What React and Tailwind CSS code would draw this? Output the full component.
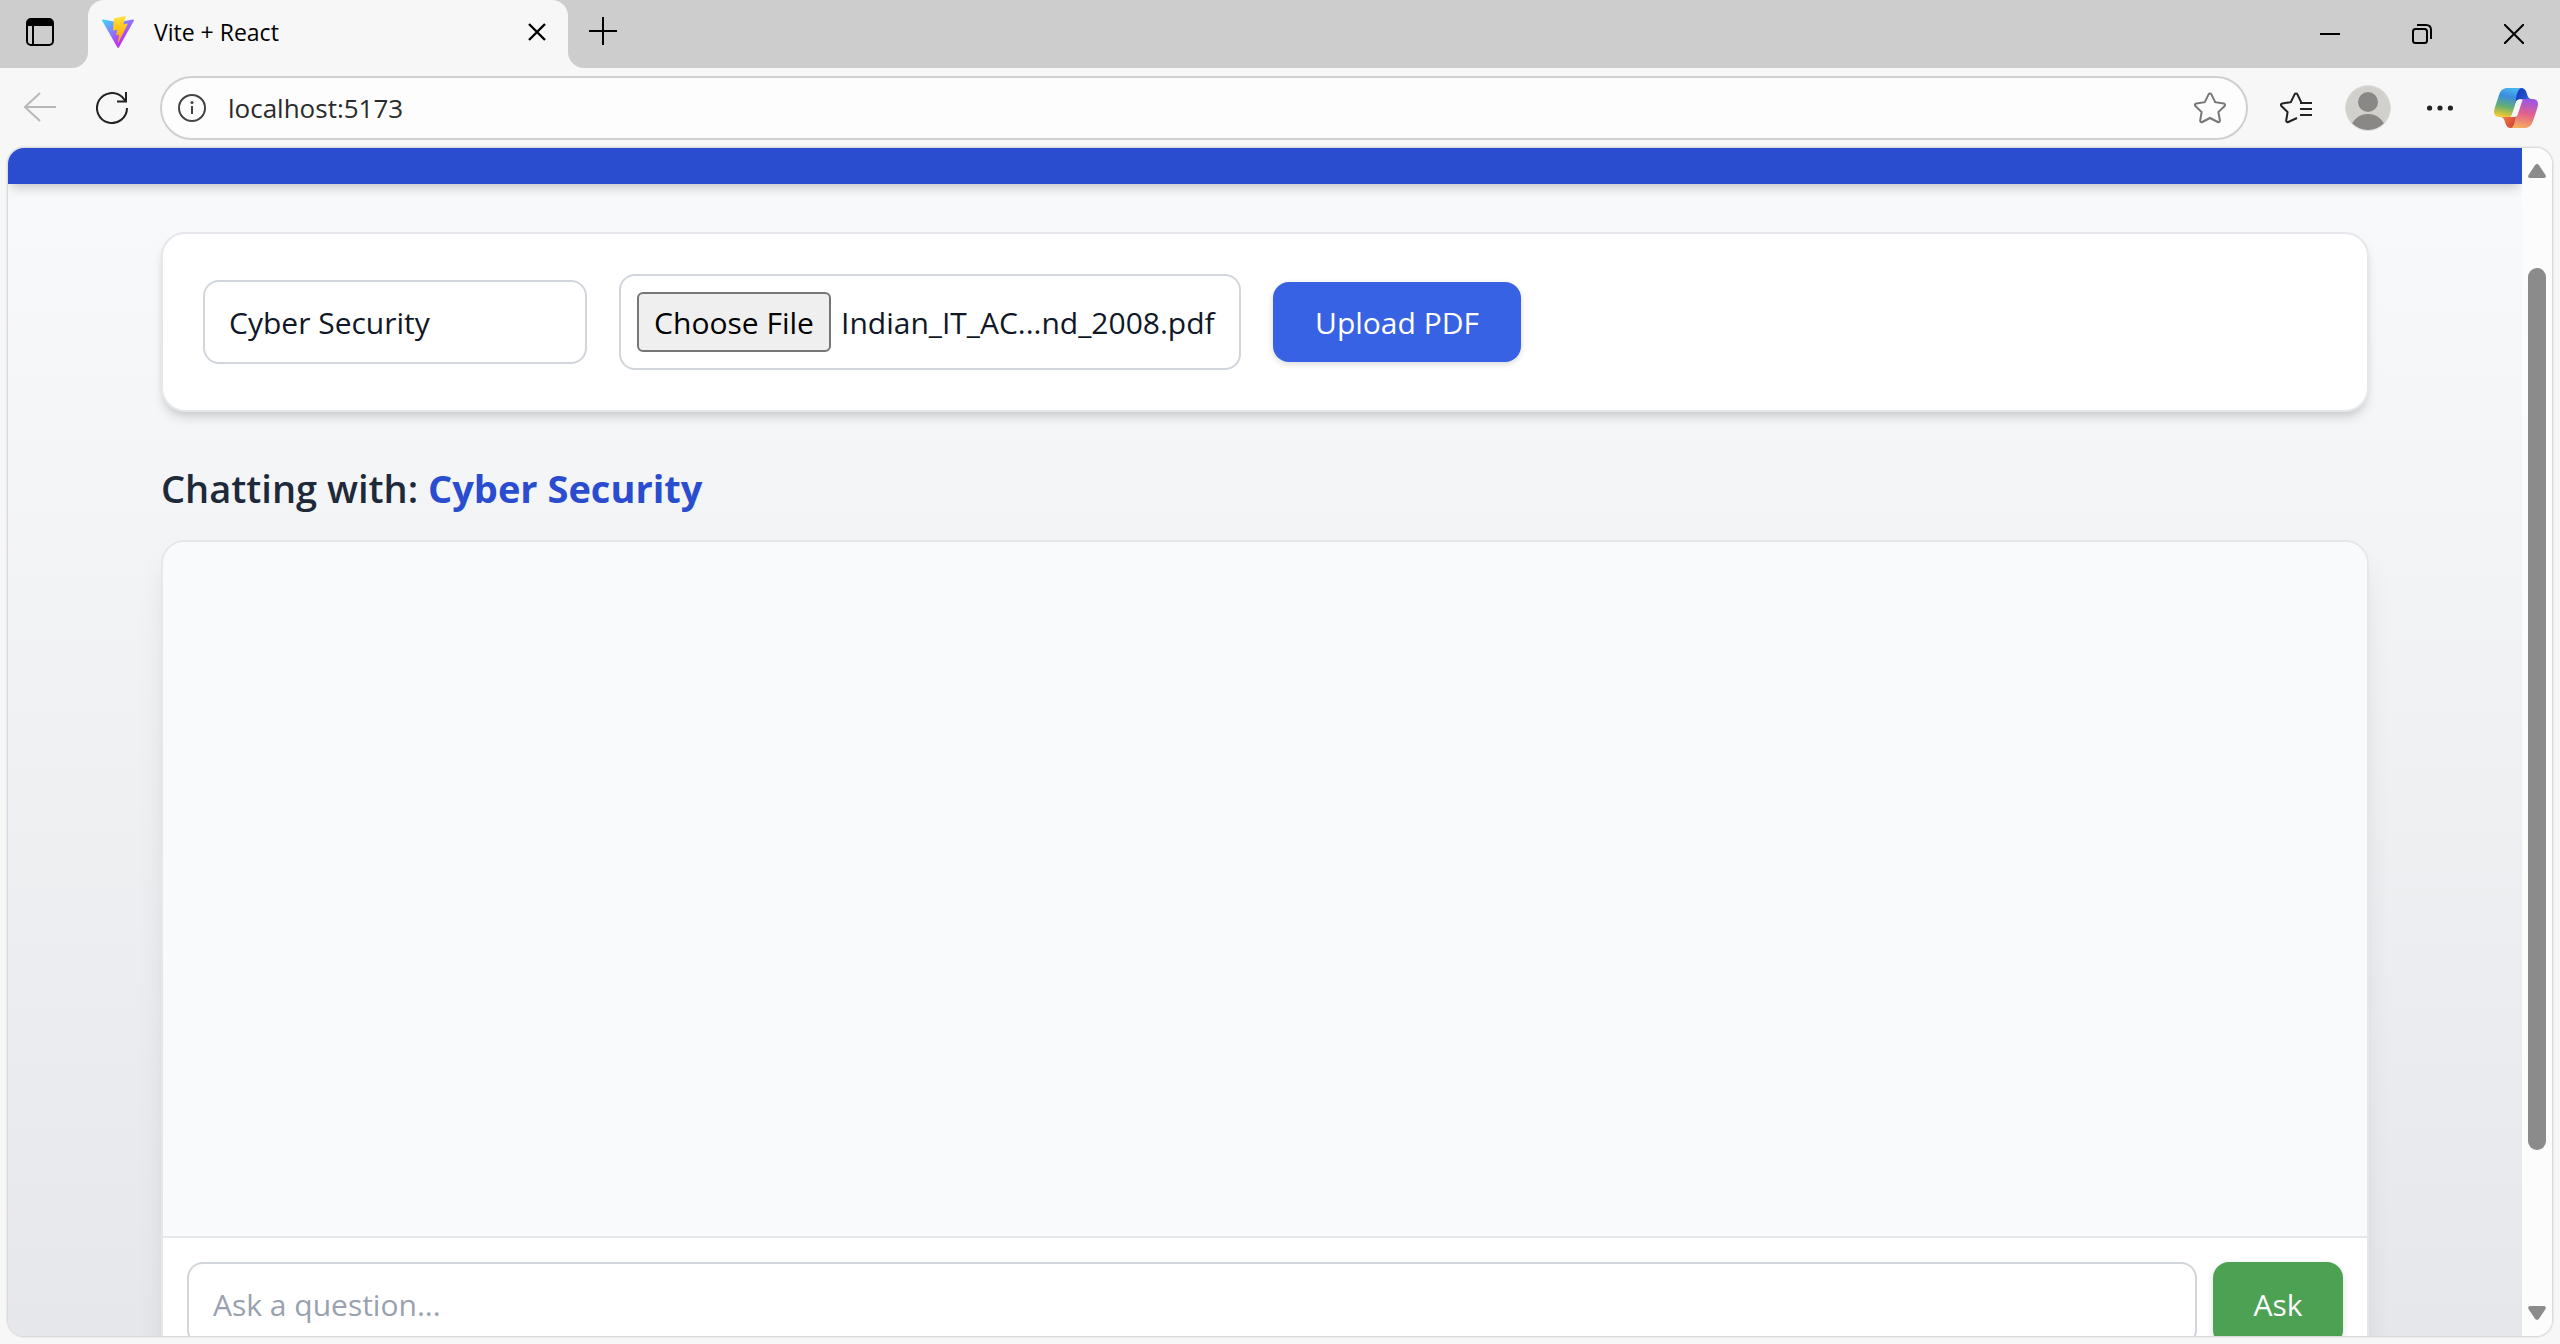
import React from "react";

function ViteLogo() {
  return (
    <svg viewBox="0 0 256 257" className="size-8" aria-hidden="true">
      <defs>
        <linearGradient id="viteA" x1="-.828%" x2="57.636%" y1="7.652%" y2="78.411%">
          <stop offset="0%" stopColor="#41D1FF" />
          <stop offset="100%" stopColor="#BD34FE" />
        </linearGradient>
        <linearGradient id="viteB" x1="43.376%" x2="50.316%" y1="2.242%" y2="89.03%">
          <stop offset="0%" stopColor="#FFEA83" />
          <stop offset="8.333%" stopColor="#FFDD35" />
          <stop offset="100%" stopColor="#FFA800" />
        </linearGradient>
      </defs>
      <path fill="url(#viteA)" d="M255.153 37.938L134.897 252.976c-2.483 4.44-8.862 4.466-11.382.048L.875 37.958c-2.746-4.814 1.371-10.646 6.827-9.67l120.385 21.517a6.537 6.537 0 0 0 2.322-.004l117.867-21.483c5.438-.991 9.574 4.796 6.877 9.62Z" />
      <path fill="url(#viteB)" d="M185.432.063L96.44 17.501a3.268 3.268 0 0 0-2.634 3.014l-5.474 92.456a3.268 3.268 0 0 0 3.997 3.378l24.777-5.718c2.318-.535 4.413 1.507 3.936 3.838l-7.361 36.047c-.495 2.426 1.782 4.5 4.151 3.78l15.304-4.649c2.372-.72 4.652 1.36 4.15 3.788l-11.698 56.621c-.732 3.542 3.979 5.473 5.943 2.437l1.313-2.028l72.516-144.72c1.215-2.423-.88-5.186-3.54-4.672l-25.505 4.922c-2.396.462-4.435-1.77-3.759-4.114l16.646-57.705c.677-2.35-1.37-4.583-3.769-4.113Z" />
    </svg>
  );
}

function CopilotLogo() {
  return (
    <svg viewBox="0 0 44 40" className="h-10 w-11" aria-hidden="true">
      <defs>
        <linearGradient id="cpLeft" x1="0.6" y1="0" x2="0.4" y2="1">
          <stop offset="0" stopColor="#48b4f0" />
          <stop offset="0.3" stopColor="#3c8ce0" />
          <stop offset="0.65" stopColor="#62b070" />
          <stop offset="1" stopColor="#f5c832" />
        </linearGradient>
        <linearGradient id="cpRight" x1="0.6" y1="0" x2="0.4" y2="1">
          <stop offset="0" stopColor="#9a55e6" />
          <stop offset="0.5" stopColor="#e2608c" />
          <stop offset="1" stopColor="#f5ae5c" />
        </linearGradient>
        <linearGradient id="cpBlue" x1="0" y1="0.2" x2="1" y2="0.8">
          <stop offset="0" stopColor="#1838b4" />
          <stop offset="0.5" stopColor="#1f49c8" />
          <stop offset="1" stopColor="#3a86ea" />
        </linearGradient>
        <linearGradient id="cpRed" x1="0" y1="0" x2="1" y2="0.7">
          <stop offset="0" stopColor="#f39a4c" />
          <stop offset="0.6" stopColor="#e4623f" />
          <stop offset="1" stopColor="#c93a3c" />
        </linearGradient>
      </defs>
      <path fill="url(#cpBlue)" d="M18 0h9c3 0 4.500 1.500 5.500 4.500l1 3c.8 2.500 2 3.500 4.500 3.500H27c-3 0-4.500 1-5.500 4L19 20Z" />
      <path fill="url(#cpRed)" d="M26 40h-9c-3 0-4.500-1.500-5.500-4.500l-1-3C9.700 30 8.500 29 6 29h11c3 0 4.500-1 5.500-4l3-8Z" />
      <path fill="url(#cpLeft)" d="M28 0H14C9 0 6.500 2.500 5 7L1 19c-2.400 7-.5 10 5 10h9c3 0 4.400-1.500 5.300-4.500l0-.5L22 11c.8-6 2.500-11 6-11Z" />
      <path fill="url(#cpRight)" d="M16.500 40H30c5 0 7.500-2.500 9-7l4-12c2.400-7 .5-10-5-10h-8c-3 0-4.400 1.500-5.300 4.500L22 28c-1.500 7-2.500 12-5.500 12Z" />
      <path fill="#f7f7f7" d="M29 12h-3c-2.500 0-3.800 1-4.500 3.500L18 26c-.4 1.500-.9 2.300-1.500 3H20c2.200 0 3.300-1 4-3.300L27.500 15c.4-1.500.8-2.300 1.500-3Z" />
    </svg>
  );
}

const STAR =
  "M16 2.500c.6 0 1.100.3 1.400.9l3.800 7.800 8.500 1.200c1.300.2 1.700 1.700.9 2.600l-6.200 6 1.500 8.500c.2 1.200-1 2.100-2.100 1.500L16 27l-7.700 4c-1.100.6-2.300-.3-2.100-1.500L7.600 21l-6.200-6c-.9-.9-.4-2.400.9-2.600l8.500-1.200 3.800-7.800c.3-.6.8-.9 1.400-.9Z";

function TabStrip() {
  return (
    <header className="flex h-[68px] shrink-0 bg-[#f7f7f7] text-black">
      <div className="flex w-[88px] items-center rounded-br-2xl bg-[#cdcdcd] pr-2 pb-1">
        <button aria-label="Tab actions" className="flex flex-1 items-center justify-center">
          <svg viewBox="0 0 28 28" className="size-7" fill="none" stroke="currentColor" strokeWidth="2">
            <rect x="1" y="1" width="26" height="26" rx="4" />
            <path d="M2 1.500h24V8H2Z" fill="currentColor" stroke="none" />
            <path d="M7 8v19" />
          </svg>
        </button>
      </div>
      <div className="w-[480px] bg-[#cdcdcd]">
        <div className="flex h-full items-center rounded-t-2xl bg-[#f7f7f7] pr-[22px] pb-1 pl-[14px]">
          <ViteLogo />
          <span className="flex-1 pl-5 text-[23px]">Vite + React</span>
          <button aria-label="Close tab">
            <svg viewBox="0 0 18 18" className="size-[18px]" stroke="currentColor" strokeWidth="2.400">
              <path d="M1 1l16 16M17 1L1 17" />
            </svg>
          </button>
        </div>
      </div>
      <div className="flex flex-1 items-center rounded-bl-2xl bg-[#cdcdcd] pl-[21px]">
        <button aria-label="New tab" className="pb-[6px]">
          <svg viewBox="0 0 28 28" className="size-7" stroke="currentColor" strokeWidth="2">
            <path d="M14 0v28M0 14h28" />
          </svg>
        </button>
        <div className="ml-auto flex gap-[72px] pr-9">
          <button aria-label="Minimize">
            <svg viewBox="0 0 20 20" className="size-5" stroke="currentColor" strokeWidth="2">
              <path d="M0 10h20" />
            </svg>
          </button>
          <button aria-label="Restore">
            <svg viewBox="0 0 20 20" className="size-5" fill="none" stroke="currentColor" strokeWidth="2">
              <rect x="1" y="5" width="14" height="14" rx="2.500" />
              <path d="M5 1h9c3 0 5 2 5 5v9" />
            </svg>
          </button>
          <button aria-label="Close">
            <svg viewBox="0 0 20 20" className="size-5" stroke="currentColor" strokeWidth="2">
              <path d="M0 0l20 20M20 0L0 20" />
            </svg>
          </button>
        </div>
      </div>
    </header>
  );
}

function Toolbar() {
  return (
    <nav className="flex h-20 shrink-0 items-center pr-[22px] pl-6 text-[#222]">
      <button aria-label="Back" disabled className="text-[#b8b8b8]">
        <svg viewBox="0 0 32 32" className="size-8" fill="none" stroke="currentColor" strokeWidth="2">
          <path d="M32 15H1M16 1L1 15l15 14" />
        </svg>
      </button>
      <button aria-label="Refresh" className="ml-10">
        <svg viewBox="0 0 32 32" className="size-8" fill="none" stroke="currentColor" strokeWidth="2">
          <path d="M31 16A15 15 0 1 1 26.500 5.300L29.500 9" />
          <path d="M30 0v9.500h-9" />
        </svg>
      </button>
      <div className="ml-8 flex h-16 flex-1 items-center rounded-full border-2 border-[#cfcfcf] bg-[#fdfdfd] pr-5 pl-4">
        <button aria-label="View site information" className="text-[#444]">
          <svg viewBox="0 0 28 28" className="size-7" fill="none" stroke="currentColor" strokeWidth="2">
            <circle cx="14" cy="14" r="13" />
            <path d="M14 12v8" />
            <circle cx="14" cy="8.500" r="1.500" fill="currentColor" stroke="none" />
          </svg>
        </button>
        <input
          aria-label="Address"
          defaultValue="localhost:5173"
          className="ml-[22px] min-w-0 flex-1 bg-transparent text-[26px] text-[#2b2b2b] outline-none"
        />
        <button aria-label="Add to favorites" className="text-[#777]">
          <svg viewBox="0 0 32 34" className="h-[34px] w-8" fill="none" stroke="currentColor" strokeWidth="2">
            <path d={STAR} />
          </svg>
        </button>
      </div>
      <button aria-label="Favorites" className="ml-8">
        <svg viewBox="0 0 34 34" className="size-[34px]" fill="none" stroke="currentColor" strokeWidth="2">
          <path d="M17 27l-8.700 4c-1.100.6-2.300-.3-2.100-1.500L7.600 21l-6.200-6c-.9-.9-.4-2.400.9-2.600l8.500-1.200 3.800-7.800c.6-1.200 2.200-1.200 2.800 0l3.800 7.800" />
          <path d="M20 12h12M20 18h12M20 24h12" />
        </svg>
      </button>
      <button aria-label="Profile" className="ml-[31px]">
        <svg viewBox="0 0 46 46" className="size-[46px]">
          <defs>
            <clipPath id="avatarClip">
              <circle cx="23" cy="23" r="22" />
            </clipPath>
          </defs>
          <circle cx="23" cy="23" r="22.500" fill="#d2d0cd" stroke="#dedede" />
          <g clipPath="url(#avatarClip)" fill="#8a8886">
            <circle cx="23" cy="17" r="10" />
            <ellipse cx="23" cy="44" rx="17" ry="15" />
          </g>
        </svg>
      </button>
      <button aria-label="Settings and more" className="ml-9">
        <svg viewBox="0 0 26 26" className="size-[26px]" fill="currentColor">
          <circle cx="2.600" cy="13" r="2.600" />
          <circle cx="13" cy="13" r="2.600" />
          <circle cx="23.400" cy="13" r="2.600" />
        </svg>
      </button>
      <button aria-label="Copilot" className="ml-[41px]">
        <CopilotLogo />
      </button>
    </nav>
  );
}

function UploadCard() {
  return (
    <section className="flex items-center gap-8 rounded-3xl border-2 border-gray-200 bg-white p-10 shadow-[0_8px_12px_-2px_rgba(0,0,0,0.12),0_4px_8px_-4px_rgba(0,0,0,0.12)]">
      <input
        aria-label="Subject"
        defaultValue="Cyber Security"
        className="h-[84px] w-96 rounded-2xl border-2 border-gray-300 px-6 text-[30px] text-gray-900 outline-none"
      />
      <label className="flex h-24 w-[622px] items-center gap-[10px] rounded-2xl border-2 border-gray-300 px-4 text-[30px] whitespace-nowrap text-gray-900">
        <input type="file" className="sr-only" />
        <span className="flex h-[60px] w-[194px] items-center justify-center rounded-md border-2 border-[#767676] bg-[#efefef] text-black">
          Choose File
        </span>
        <span>Indian_IT_AC...nd_2008.pdf</span>
      </label>
      <button className="h-20 w-[248px] rounded-2xl bg-[#3762e3] text-[30px] text-white shadow-[0_2px_6px_rgba(0,0,0,0.15)]">
        Upload PDF
      </button>
    </section>
  );
}

function ChatCard() {
  return (
    <section className="flex flex-col overflow-hidden rounded-3xl border-2 border-gray-200 bg-white shadow-[0_20px_30px_-6px_rgba(0,0,0,0.10),0_8px_12px_-8px_rgba(0,0,0,0.10)]">
      <div className="h-[694px] bg-[#f9fafc]" />
      <form className="flex gap-4 border-t-2 border-gray-200 p-6">
        <input
          aria-label="Question"
          placeholder="Ask a question..."
          className="h-[84px] min-w-0 flex-1 rounded-2xl border-2 border-gray-300 px-6 text-[30px] outline-none placeholder:text-gray-400"
        />
        <button type="button" className="w-[130px] rounded-2xl bg-[#4da153] text-[30px] text-white shadow-[0_2px_6px_rgba(0,0,0,0.15)]">
          Ask
        </button>
      </form>
    </section>
  );
}

function Scrollbar() {
  return (
    <div className="flex w-[30px] shrink-0 flex-col items-center bg-[#fcfcfc] py-4">
      <svg viewBox="0 0 18 14" className="h-[14px] w-[18px]" fill="#8b8b8b">
        <path d="M7 1.200Q9-1 11 1.200L17.500 11Q18.500 14 16 14H2Q-.5 14 .5 11Z" />
      </svg>
      <div className="flex w-full flex-1 flex-col items-center">
        <div className="h-[90px]" />
        <div className="w-[18px] flex-1 rounded-full bg-[#8b8b8b]" />
        <div className="h-[156px]" />
      </div>
      <svg viewBox="0 0 18 14" className="h-[14px] w-[18px] rotate-180" fill="#8b8b8b">
        <path d="M7 1.200Q9-1 11 1.200L17.500 11Q18.500 14 16 14H2Q-.5 14 .5 11Z" />
      </svg>
    </div>
  );
}

export default function App() {
  return (
    <div className="flex h-screen flex-col overflow-hidden bg-[#f7f7f7] font-['Open_Sans','Noto_Sans',sans-serif]">
      <TabStrip />
      <Toolbar />
      <div className="mx-2 mb-2 flex min-h-0 flex-1 overflow-hidden rounded-2xl shadow-[0_0_2px_1px_rgba(0,0,0,0.16)]">
        <div className="min-w-0 flex-1 overflow-hidden bg-linear-to-b from-[#f9fafb] via-[#f0f1f3] to-[#e6e7eb]">
          <div className="h-9 bg-[#2a4dd0] shadow-[0_8px_12px_-2px_rgba(0,0,0,0.12),0_4px_8px_-4px_rgba(0,0,0,0.12)]" />
          <main className="mx-auto max-w-[2304px] px-12 pt-12">
            <UploadCard />
            <h2 className="mt-12 mb-6 text-[38px] leading-14 font-semibold text-gray-800">
              Chatting with: <span className="font-bold text-[#2a4dd0]">Cyber Security</span>
            </h2>
            <ChatCard />
          </main>
        </div>
        <Scrollbar />
      </div>
    </div>
  );
}
